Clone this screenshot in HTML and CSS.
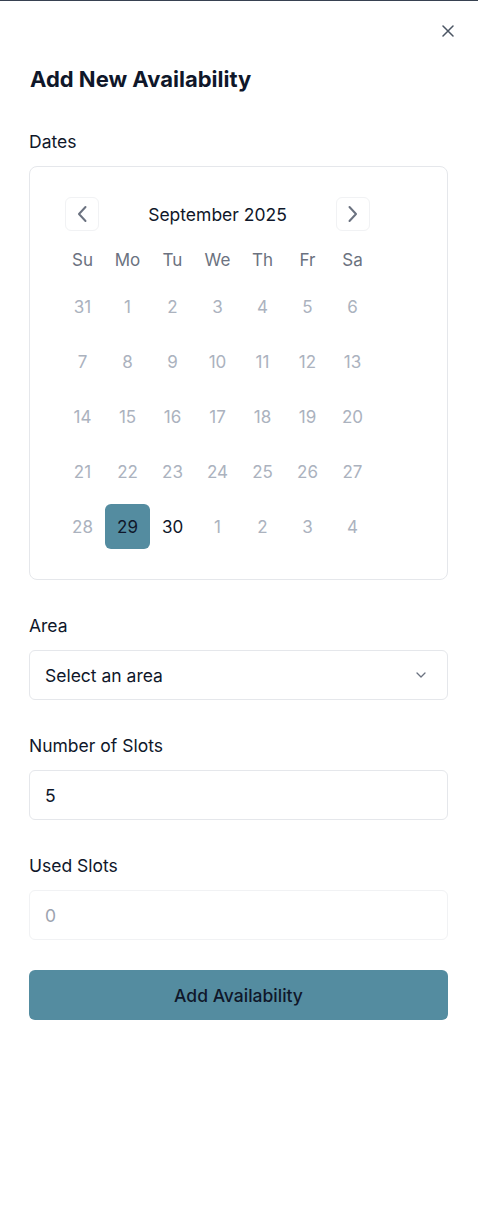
FILE: index.html
```html
<!DOCTYPE html>
<html lang="en">
<head>
<meta charset="utf-8">
<title>Add New Availability</title>
<link rel="stylesheet" href="styles.css">
</head>
<body>
<div class="panel">
  <button class="close" aria-label="Close">
    <svg width="12" height="12" viewBox="0 0 12 12"><path d="M1 1L11 11M11 1L1 11" stroke="#4b5563" stroke-width="1.5" stroke-linecap="round"/></svg>
  </button>
  <h1 class="title">Add New Availability</h1>

  <div class="field">
    <div class="label">Dates</div>
    <div class="calendar">
      <div class="cal-head">
        <button class="nav" aria-label="Previous month">
          <svg width="20" height="20" viewBox="0 0 20 20"><path d="M13.5 3L7 10L13.5 17" fill="none" stroke="#6b7280" stroke-width="2" stroke-linecap="round" stroke-linejoin="round"/></svg>
        </button>
        <div class="month">September 2025</div>
        <button class="nav" aria-label="Next month">
          <svg width="20" height="20" viewBox="0 0 20 20"><path d="M6.5 3L13 10L6.5 17" fill="none" stroke="#6b7280" stroke-width="2" stroke-linecap="round" stroke-linejoin="round"/></svg>
        </button>
      </div>
      <div class="grid">
        <div class="wd">Su</div><div class="wd">Mo</div><div class="wd">Tu</div><div class="wd">We</div><div class="wd">Th</div><div class="wd">Fr</div><div class="wd">Sa</div>
        <div class="day">31</div><div class="day">1</div><div class="day">2</div><div class="day">3</div><div class="day">4</div><div class="day">5</div><div class="day">6</div>
        <div class="day">7</div><div class="day">8</div><div class="day">9</div><div class="day">10</div><div class="day">11</div><div class="day">12</div><div class="day">13</div>
        <div class="day">14</div><div class="day">15</div><div class="day">16</div><div class="day">17</div><div class="day">18</div><div class="day">19</div><div class="day">20</div>
        <div class="day">21</div><div class="day">22</div><div class="day">23</div><div class="day">24</div><div class="day">25</div><div class="day">26</div><div class="day">27</div>
        <div class="day">28</div><div class="day selected">29</div><div class="day active">30</div><div class="day">1</div><div class="day">2</div><div class="day">3</div><div class="day">4</div>
      </div>
    </div>
  </div>

  <div class="field">
    <div class="label">Area</div>
    <div class="select">
      <span>Select an area</span>
      <svg width="14" height="14" viewBox="0 0 14 14"><path d="M3 5L7 9L11 5" fill="none" stroke="#6b7280" stroke-width="1.3" stroke-linecap="round" stroke-linejoin="round"/></svg>
    </div>
  </div>

  <div class="field">
    <div class="label">Number of Slots</div>
    <div class="input">5</div>
  </div>

  <div class="field">
    <div class="label">Used Slots</div>
    <div class="input disabled">0</div>
  </div>

  <button class="submit">Add Availability</button>
</div>
</body>
</html>
```

FILE: styles.css
```css
* { box-sizing: border-box; }
html, body { margin: 0; padding: 0; background: #ffffff; }
body {
  font-family: Inter, "Noto Sans", sans-serif;
  color: #0f172a;
  border-top: 1px solid #374151;
}
.panel {
  position: relative;
  padding: 64px 30px 0 29px;
  display: flex;
  flex-direction: column;
}
.close {
  position: absolute;
  top: 24px;
  right: 24px;
  width: 12px;
  height: 12px;
  padding: 0;
  border: 0;
  background: none;
  display: flex;
}
.title {
  margin: 0 0 37px 1px;
  font-size: 22px;
  line-height: 28px;
  font-weight: 700;
  color: #0f172a;
}
.field {
  display: flex;
  flex-direction: column;
  gap: 12px;
  margin-bottom: 34px;
}
.label {
  font-size: 17.5px;
  line-height: 24px;
  font-weight: 400;
  color: #0f172a;
}
.calendar {
  border: 1px solid #e5e7eb;
  border-radius: 8px;
  padding: 30px;
}
.cal-head {
  width: 315px;
  height: 34px;
  padding: 0 5px;
  margin-bottom: 15px;
  display: flex;
  align-items: center;
  justify-content: space-between;
}
.nav {
  width: 34px;
  height: 34px;
  padding: 0;
  border: 1px solid #f1f2f4;
  border-radius: 6px;
  background: #fff;
  display: flex;
  align-items: center;
  justify-content: center;
}
.month {
  font-size: 17.5px;
  font-weight: 400;
  color: #0f172a;
}
.grid {
  display: grid;
  grid-template-columns: repeat(7, 45px);
  grid-template-rows: 28px repeat(5, 45px);
  row-gap: 10px;
}
.wd {
  display: flex;
  align-items: center;
  justify-content: center;
  font-size: 17px;
  color: #6b7280;
}
.day {
  display: flex;
  align-items: center;
  justify-content: center;
  font-size: 17px;
  color: #abb2be;
  border-radius: 6px;
}
.day.active { color: #0f172a; }
.day.selected { background: #548ca0; color: #0f172a; }
.select, .input {
  height: 50px;
  border: 1px solid #e5e7eb;
  border-radius: 6px;
  padding: 0 16px 0 15px;
  display: flex;
  align-items: center;
  justify-content: space-between;
  font-size: 17.5px;
  color: #0f172a;
}
.select svg { margin-right: 3px; }
.input.disabled {
  border-color: #f1f2f4;
  color: #9ca3af;
}
.field:last-of-type { margin-bottom: 30px; }
.submit {
  height: 50px;
  border: 0;
  border-radius: 6px;
  background: #548ca0;
  color: #0f172a;
  font-family: Inter, "Noto Sans", sans-serif;
  font-size: 17.5px;
  font-weight: 500;
}
```
